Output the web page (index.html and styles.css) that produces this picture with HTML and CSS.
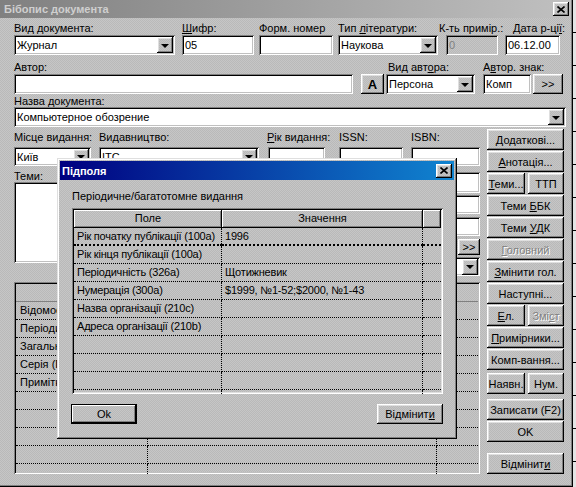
FILE: index.html
```html
<!DOCTYPE html>
<html lang="uk">
<head>
    <meta charset="UTF-8">
    <title>Бібопис документа</title>
    <link rel="stylesheet" href="styles.css">
</head>
<body>
<div class="window">
    <div class="titlebar">
        <span>Бібопис документа</span>
        <button class="close"><svg width="8" height="7" viewBox="0 0 8 7"><path d="M0.5 0.5l7 6M7.5 0.5l-7 6" stroke="#000" stroke-width="1.6"/></svg></button>
    </div>

    <div class="form">
        <!-- first line of fields -->
        <div class="row row1">
            <div class="fld f-vid"><label>Вид документа:</label><div class="combo"><span>Журнал</span><i class="drop"></i></div></div>
            <div class="fld f-shifr"><label><u>Ш</u>ифр:</label><div class="edit">05</div></div>
            <div class="fld f-form"><label>Форм. номер</label><div class="edit"></div></div>
            <div class="fld f-typ"><label>Тип <u>л</u>ітератури:</label><div class="combo"><span>Наукова</span><i class="drop"></i></div></div>
            <div class="fld f-count"><label>К-ть примір.:</label><div class="edit disabled">0</div></div>
            <div class="fld f-date"><label>Дата р-ці<u>ї</u>:</label><div class="edit">06.12.00</div></div>
        </div>

        <div class="row row2">
            <div class="fld f-author"><label>Автор:</label><div class="edit"></div></div>
            <button class="btn abtn">A</button>
            <div class="fld f-vidavt"><label>Вид авт<u>о</u>ра:</label><div class="combo"><span>Персона</span><i class="drop"></i></div></div>
            <div class="fld f-znak"><label>А<u>в</u>тор. знак:</label><div class="edit">Комп</div></div>
            <button class="btn more">&gt;&gt;</button>
        </div>

        <div class="row row3">
            <div class="fld f-name"><label>Назва документа:</label><div class="combo"><span>Компьютерное обозрение</span><i class="drop"></i></div></div>
        </div>

        <div class="lower">
            <div class="left">
                <div class="row row4">
                    <div class="fld f-city"><label>Місце видання:</label><div class="combo"><span>Київ</span><i class="drop"></i></div></div>
                    <div class="fld f-pub"><label>Видавництво:</label><div class="combo"><span>ІТС</span><i class="drop"></i></div></div>
                    <div class="fld f-year"><label><u>Р</u>ік видання:</label><div class="edit"></div></div>
                    <div class="fld f-issn"><label>ISSN:</label><div class="edit"></div></div>
                    <div class="fld f-isbn"><label>ISBN:</label><div class="edit"></div></div>
                </div>

                <div class="row row5">
                    <div class="fld f-themes"><label>Теми:</label><div class="memo"></div></div>
                    <div class="side">
                        <div class="edit s1"></div>
                        <div class="edit s2"></div>
                        <div class="edit s3"></div>
                        <button class="btn s-more">&gt;&gt;</button>
                        <div class="combo s-combo"><span></span><i class="drop"></i></div>
                    </div>
                </div>

                <div class="table">
                    <div class="trow thead"><div></div><div></div><div></div></div>
                    <div class="trow"><div>Відомості про видання</div><div></div><div></div></div>
                    <div class="trow"><div>Періодичне видання</div><div></div><div></div></div>
                    <div class="trow"><div>Загальні примітки</div><div></div><div></div></div>
                    <div class="trow"><div>Серія (Продовж.)</div><div></div><div></div></div>
                    <div class="trow"><div>Примітки</div><div></div><div></div></div>
                    <div class="trow"><div></div><div></div><div></div></div>
                    <div class="trow"><div></div><div></div><div></div></div>
                    <div class="trow"><div></div><div></div><div></div></div>
                    <div class="trow"><div></div><div></div><div></div></div>
                    <div class="trow"><div></div><div></div><div></div></div>
                </div>
            </div>

            <!-- command buttons -->
            <div class="cmds">
                <button class="btn"><u>Д</u>одаткові...</button>
                <button class="btn"><u>А</u>нотація...</button>
                <div class="pair"><button class="btn"><u>Т</u>еми...</button><button class="btn">ТТП</button></div>
                <button class="btn">Теми <u>Б</u>БК</button>
                <button class="btn">Теми <u>У</u>ДК</button>
                <button class="btn off"><u>Г</u>оловний</button>
                <button class="btn"><u>З</u>мінити гол.</button>
                <button class="btn">Наступні...</button>
                <div class="pair"><button class="btn"><u>Е</u>л.</button><button class="btn off">Змі<u>с</u>т</button></div>
                <button class="btn"><u>П</u>римірники...</button>
                <button class="btn">Комп-вання...</button>
                <div class="pair pair-gap"><button class="btn">Наявн.</button><button class="btn">Нум.</button></div>
                <button class="btn save">Записати (F2)</button>
                <button class="btn">OK</button>
                <button class="btn cancel">Відмінит<u>и</u></button>
            </div>
        </div>
    </div>
</div>
<div class="behind"></div>

<!-- sub-field dialog on top -->
<div class="dialog">
    <div class="caption">
        <span>Підполя</span>
        <button class="close"><svg width="8" height="7" viewBox="0 0 8 7"><path d="M0.5 0.5l7 6M7.5 0.5l-7 6" stroke="#000" stroke-width="1.6"/></svg></button>
    </div>
    <div class="dlg-body">
        <div class="group-title">Періодичне/багатотомне видання</div>
        <div class="grid">
            <div class="grow ghead"><div>Поле</div><div>Значення</div><div></div></div>
            <div class="grow focus"><div>Рік початку публікації (100а)</div><div>1996</div><div></div></div>
            <div class="grow"><div>Рік кінця публікації (100а)</div><div></div><div></div></div>
            <div class="grow"><div>Періодичність (326а)</div><div>Щотижневик</div><div></div></div>
            <div class="grow"><div>Нумерація (300а)</div><div>$1999, №1-52;$2000, №1-43</div><div></div></div>
            <div class="grow"><div>Назва організації (210с)</div><div></div><div></div></div>
            <div class="grow"><div>Адреса організації (210b)</div><div></div><div></div></div>
            <div class="grow"><div></div><div></div><div></div></div>
            <div class="grow"><div></div><div></div><div></div></div>
            <div class="grow"><div></div><div></div><div></div></div>
            <div class="grow"><div></div><div></div><div></div></div>
        </div>
        <div class="dlg-buttons">
            <button class="btn default">Ok</button>
            <button class="btn">Відмінит<u>и</u></button>
        </div>
    </div>
</div>
</body>
</html>
```

FILE: styles.css
```css
* {
    box-sizing: border-box;
}
body {
    margin: 0;
    width: 576px;
    height: 487px;
    overflow: hidden;
    display: flex;
    font-family: "Liberation Sans", Arial, sans-serif;
    font-size: 11px;
    color: #000;
    background: #c0c0c0;
}
.window {
    position: relative;
    width: 573px;
    height: 487px;
    background: repeating-conic-gradient(#c6c6c6 0 25%, #b9b9b9 0 50%) 0 0 / 2px 2px;
    box-shadow: inset -1px -1px #000, inset -2px -2px #808080;
}
.behind {
    flex: 1;
    background: #e4e4e4 repeating-linear-gradient(to bottom, transparent 0 32px, #000 32px 33px);
}

/* title bars */
.titlebar {
    display: flex;
    align-items: center;
    justify-content: space-between;
    height: 18px;
    margin-right: 2px;
    padding: 0 2px 0 4px;
    background: linear-gradient(to right, #808080, #c0c0c0);
    color: #cfcfcf;
    font-weight: bold;
}
.close {
    width: 16px;
    height: 14px;
    display: flex;
    align-items: center;
    justify-content: center;
}
.close svg {
    display: block;
}

/* raised things */
.btn, .drop, .close {
    border: 0;
    padding: 0;
    font: inherit;
    color: #000;
    background: repeating-conic-gradient(#c6c6c6 0 25%, #b9b9b9 0 50%) 0 0 / 2px 2px;
    box-shadow: inset -1px -1px #000, inset 1px 1px #fff, inset -2px -2px #808080, inset 2px 2px #dfdfdf;
}
.btn {
    white-space: nowrap;
    text-align: center;
}
.btn.off {
    color: #808080;
    text-shadow: 1px 1px #fff;
}
.btn.default {
    box-shadow: inset 0 0 0 1px #000, inset -2px -2px #000, inset 2px 2px #fff, inset -3px -3px #808080;
}

/* sunken fields */
.edit, .combo, .memo {
    height: 20px;
    display: flex;
    align-items: center;
    padding: 2px 2px 2px 3px;
    white-space: nowrap;
    overflow: hidden;
    background: #fff;
    box-shadow: inset 1px 1px #808080, inset -1px -1px #fff, inset 2px 2px #000, inset -2px -2px #c0c0c0;
}
.edit.disabled {
    color: #808080;
    background: repeating-conic-gradient(#c6c6c6 0 25%, #b9b9b9 0 50%) 0 0 / 2px 2px;
}
.combo span {
    flex: 1;
    overflow: hidden;
}
.drop {
    width: 16px;
    height: 16px;
    flex: none;
    display: flex;
    align-items: center;
    justify-content: center;
}
.drop::after {
    content: "";
    border-top: 4px solid #000;
    border-left: 4px solid transparent;
    border-right: 4px solid transparent;
    margin-top: 1px;
}

/* form */
.form {
    padding: 3px 0 0 14px;
}
.row {
    display: flex;
    align-items: flex-end;
}
.fld {
    display: flex;
    flex-direction: column;
}
.fld label {
    height: 14px;
    line-height: 14px;
    white-space: nowrap;
}
.f-vid { width: 161px; }
.f-shifr { width: 72px; margin-left: 7px; }
.f-form { width: 74px; margin-left: 5px; }
.f-typ { width: 100px; margin-left: 5px; }
.f-count { width: 59px; margin-left: 1px; }
.f-count .edit { margin-left: 7px; }
.f-date { width: 55px; margin-left: 7px; }
.f-date label { padding-left: 8px; }

.row2 { margin-top: 5px; }
.f-author { width: 339px; }
.abtn {
    width: 23px;
    height: 20px;
    margin-left: 8px;
    font-size: 13px;
    font-weight: 900;
}
.f-vidavt { width: 89px; margin-left: 2px; }
.f-vidavt label { padding-left: 2px; }
.f-znak { width: 48px; margin-left: 8px; }
.more {
    width: 30px;
    height: 20px;
    margin-left: 2px;
}
.row3 .fld label { height: 13px; }
.f-name { width: 552px; }

.lower {
    display: flex;
    margin-top: 2px;
}
.left {
    width: 466px;
}
.row4 { padding-top: 1px; }
.row4 .fld label { height: 17px; }
.row4 .edit, .row4 .combo { height: 19px; }
.f-city { width: 77px; }
.f-pub { width: 160px; margin-left: 8px; }
.f-year { width: 58px; margin-left: 8px; }
.f-year .edit { margin-left: 1px; }
.f-issn { width: 64px; margin-left: 14px; }
.f-isbn { width: 69px; margin-left: 8px; }

.row5 {
    align-items: flex-start;
    margin-top: 3px;
}
.f-themes { width: 200px; }
.f-themes label { height: 13px; }
.memo { height: 81px; }
.side {
    display: flex;
    flex-direction: column;
    width: 170px;
    margin-left: auto;
    padding-top: 3px;
}
.side .s1 { height: 21px; }
.side .s2 { height: 19px; margin-top: 2px; }
.side .s3 { height: 19px; margin-top: 3px; }
.s-more {
    width: 22px;
    height: 16px;
    margin: 3px 0 0 auto;
}
.s-combo { height: 19px; margin-top: 2px; }

/* tables */
.table {
    margin-top: 6px;
    height: 192px;
    padding: 2px;
    overflow: hidden;
    box-shadow: inset 1px 1px #808080, inset -1px -1px #fff, inset 2px 2px #000, inset -2px -2px #c0c0c0;
}
.trow {
    display: grid;
    grid-template-columns: 132px 289px 41px;
    height: 18px;
}
.trow > div, .grow > div {
    padding-left: 4px;
    line-height: 17px;
    white-space: nowrap;
    overflow: hidden;
    border-bottom: 1px dotted #000;
    border-right: 1px dotted #000;
}
.grow > div {
    padding-left: 3px;
    letter-spacing: -0.2px;
}
.trow > div:last-child, .grow > div:last-child {
    border-right: 0;
}
.thead > div {
    border-bottom: 1px solid #808080;
    border-right: 0;
}

/* dialog */
.dialog {
    position: absolute;
    left: 57px;
    top: 158px;
    width: 400px;
    height: 281px;
    padding: 3px;
    background: repeating-conic-gradient(#c6c6c6 0 25%, #b9b9b9 0 50%) 0 0 / 2px 2px;
    box-shadow: inset -1px -1px #000, inset 1px 1px #dfdfdf, inset -2px -2px #808080, inset 2px 2px #fff;
}
.caption {
    display: flex;
    align-items: center;
    justify-content: space-between;
    height: 19px;
    padding: 0 2px 0 2px;
    background: linear-gradient(to right, #000080, #1084d0);
    color: #fff;
    font-weight: bold;
}
.dlg-body {
    padding: 9px 0 0 12px;
}
.group-title {
    line-height: 14px;
}
.grid {
    width: 371px;
    height: 186px;
    margin-top: 5px;
    padding: 2px;
    overflow: hidden;
    box-shadow: inset 1px 1px #808080, inset -1px -1px #fff, inset 2px 2px #000, inset -2px -2px #dfdfdf;
}
.grow {
    display: grid;
    grid-template-columns: 148px 201px 18px;
    height: 18px;
}
.grow.focus > div {
    border-bottom: 2px dotted #000;
}
.ghead > div {
    text-align: center;
    padding: 0;
    border: 0;
    letter-spacing: 0;
    box-shadow: inset -1px -1px #000, inset 1px 1px #fff, inset -2px -2px #808080;
}
.dlg-buttons {
    display: flex;
    justify-content: space-between;
    width: 372px;
    margin: 10px 0 0 -1px;
}
.dlg-buttons .btn {
    width: 66px;
    height: 20px;
}

/* command column */
.cmds {
    display: flex;
    flex-direction: column;
    width: 77px;
    margin-left: 7px;
}
.cmds .btn {
    height: 21px;
    margin-bottom: 1px;
}
.pair {
    display: flex;
    justify-content: space-between;
}
.pair .btn {
    width: 38px;
}
.pair .btn + .btn {
    width: 36px;
}
.pair-gap {
    margin-top: 2px;
}
.cmds .save {
    margin-top: 4px;
}
.cmds .cancel {
    margin-top: 10px;
}
```
